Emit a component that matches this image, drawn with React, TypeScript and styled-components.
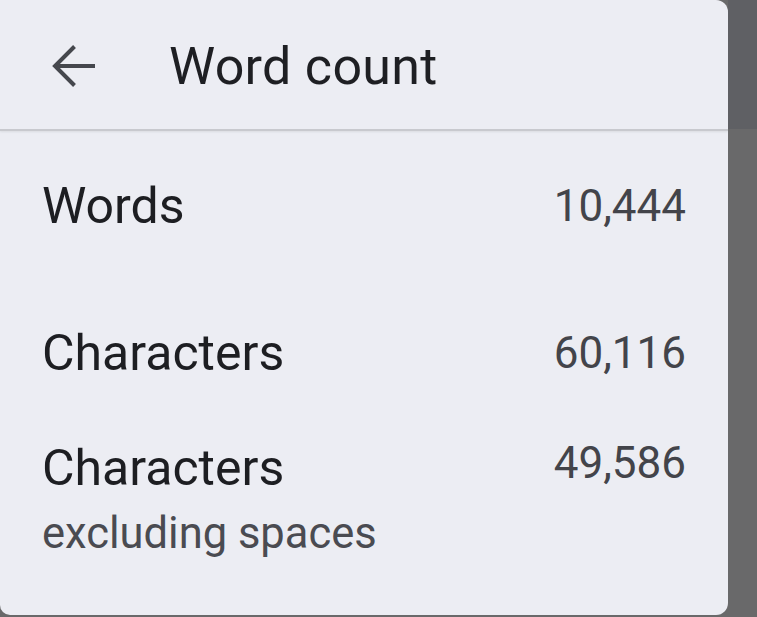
import React from 'react';
import styled, { createGlobalStyle } from 'styled-components';

const GlobalStyle = createGlobalStyle`
  html, body {
    margin: 0;
    padding: 0;
    background: #69696a;
    font-family: Roboto, "Noto Sans", sans-serif;
  }
`;

const Screen = styled.div`
  width: 757px;
  height: 617px;
  display: flex;
  overflow: hidden;
`;

const Panel = styled.section`
  width: 728px;
  height: 615px;
  background: #ecedf3;
  border-radius: 0 12px 12px 10px;
  display: flex;
  flex-direction: column;
  overflow: hidden;
`;

const Backdrop = styled.div`
  flex: 1;
  display: flex;
  flex-direction: column;
`;

const BackdropBand = styled.div<{ $tone: string; $height?: number }>`
  background: ${(p) => p.$tone};
  height: ${(p) => (p.$height ? `${p.$height}px` : 'auto')};
  flex: ${(p) => (p.$height ? '0 0 auto' : '1')};
`;

const Header = styled.header`
  height: 131px;
  box-sizing: border-box;
  padding: 4px 0 0 52px;
  display: flex;
  align-items: center;
  gap: 73px;
  border-bottom: 2px solid #c8c9ce;
  box-shadow: 0 1px 2px rgba(60, 64, 67, 0.1);
  flex: 0 0 auto;
`;

const BackButton = styled.button`
  width: 44px;
  height: 44px;
  padding: 0;
  border: none;
  background: transparent;
  display: flex;
  align-items: center;
  justify-content: center;
  margin-top: -2px;
`;

const Title = styled.h1`
  margin: 0;
  font-size: 52px;
  line-height: 60px;
  font-weight: 400;
  color: #1e1f23;
  letter-spacing: 0.3px;
`;

const Body = styled.div`
  display: flex;
  flex-direction: column;
  padding: 45px 42px 0 42px;
`;

const Row = styled.div<{ $gap: number }>`
  display: flex;
  justify-content: space-between;
  align-items: flex-start;
  margin-bottom: ${(p) => p.$gap}px;
`;

const Label = styled.div`
  display: flex;
  flex-direction: column;
`;

const LabelMain = styled.span`
  font-size: 50px;
  line-height: 60px;
  color: #1d1e22;
`;

const LabelSub = styled.span`
  font-size: 43.5px;
  line-height: 50px;
  margin-top: 11px;
  color: #4a4b51;
`;

const Value = styled.span<{ $lift: number }>`
  font-size: 44px;
  line-height: 60px;
  margin-top: ${(p) => -p.$lift}px;
  color: #43444a;
`;

const stats = [
  { label: 'Words', value: '10,444', gap: 87, lift: 0 },
  { label: 'Characters', value: '60,116', gap: 55, lift: 0 },
  { label: 'Characters', sub: 'excluding spaces', value: '49,586', gap: 0, lift: 5 },
];

export default function App() {
  return (
    <>
      <GlobalStyle />
      <Screen>
        <Panel>
          <Header>
            <BackButton aria-label="Back">
              <svg width="44" height="44" viewBox="0 0 44 44">
                <path
                  d="M43 22 H4 M22.5 2.5 L3 22 L22.5 41.5"
                  fill="none"
                  stroke="#45474d"
                  strokeWidth="4"
                />
              </svg>
            </BackButton>
            <Title>Word count</Title>
          </Header>
          <Body>
            {stats.map((s, i) => (
              <Row key={i} $gap={s.gap}>
                <Label>
                  <LabelMain>{s.label}</LabelMain>
                  {s.sub && <LabelSub>{s.sub}</LabelSub>}
                </Label>
                <Value $lift={s.lift}>{s.value}</Value>
              </Row>
            ))}
          </Body>
        </Panel>
        <Backdrop>
          <BackdropBand $tone="#5f6064" $height={129} />
          <BackdropBand $tone="#69696a" />
        </Backdrop>
      </Screen>
    </>
  );
}
